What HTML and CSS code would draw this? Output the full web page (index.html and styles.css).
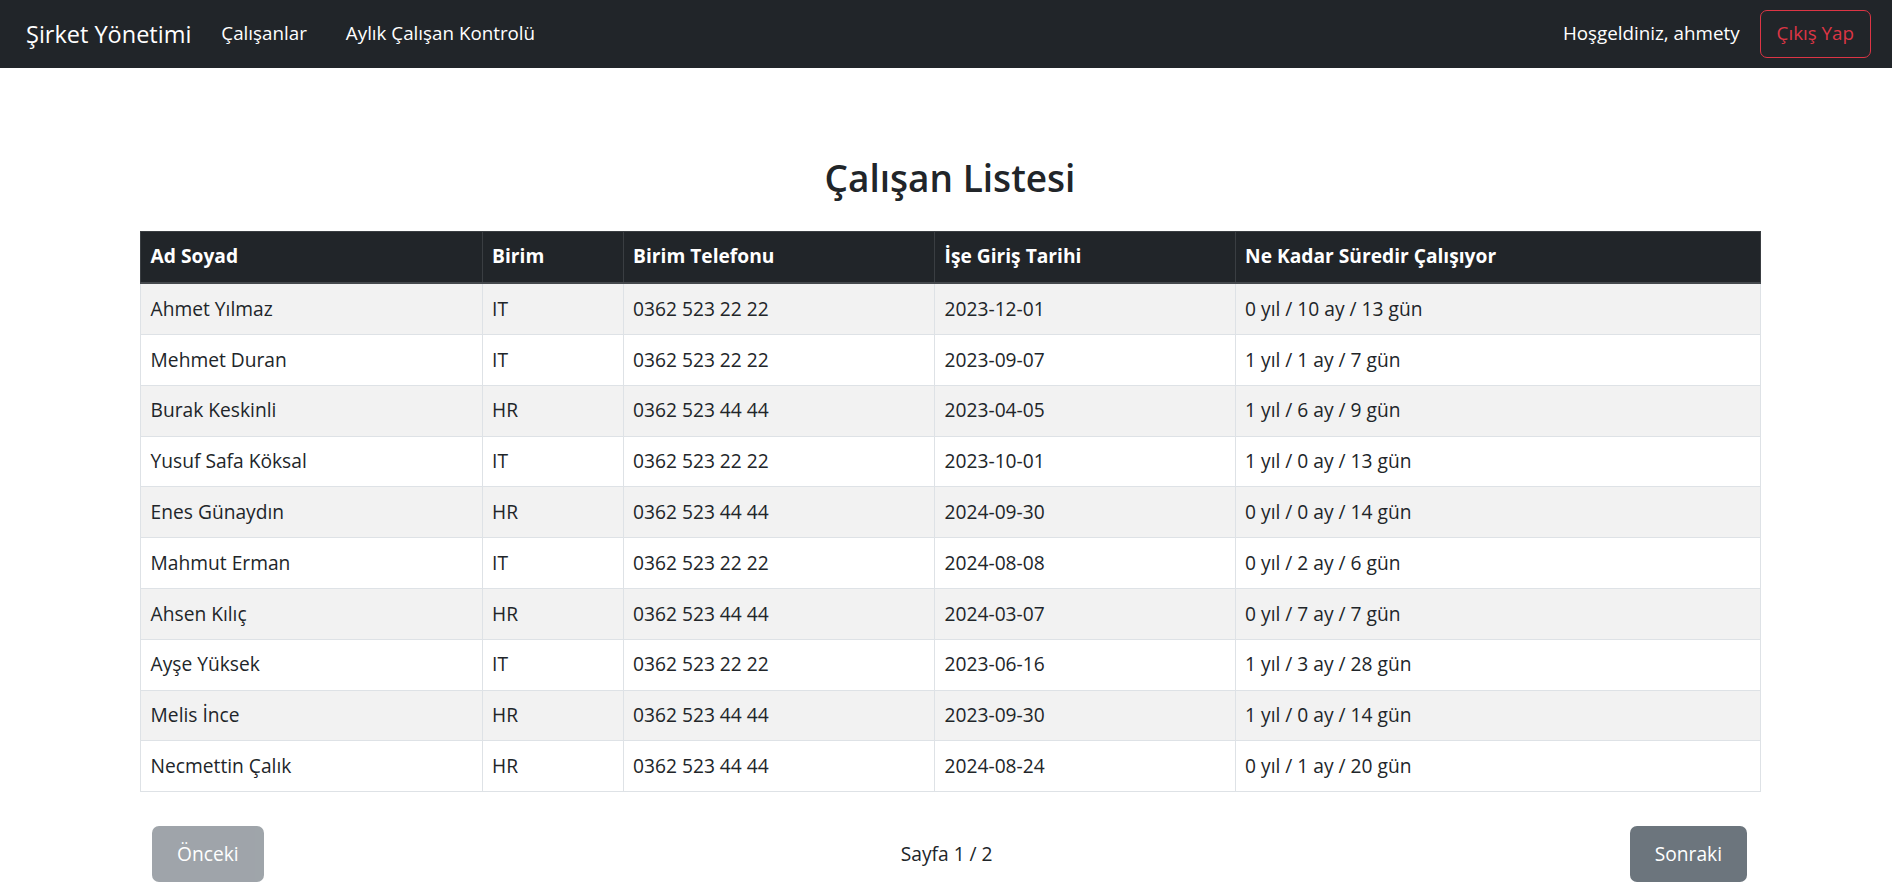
FILE: index.html
```html
<!DOCTYPE html>
<html lang="tr">
<head>
<meta charset="utf-8">
<title>Şirket Yönetimi</title>
<link rel="stylesheet" href="styles.css">
</head>
<body>
<nav class="navbar">
  <div class="nav-left">
    <a class="brand" href="#">Şirket Yönetimi</a>
    <a class="nav-link first" href="#">Çalışanlar</a>
    <a class="nav-link" href="#">Aylık Çalışan Kontrolü</a>
  </div>
  <div class="nav-right">
    <span class="welcome">Hoşgeldiniz, ahmety</span>
    <button class="btn-logout">Çıkış Yap</button>
  </div>
</nav>
<main class="content">
  <h2 class="title">Çalışan Listesi</h2>
  <table class="emp-table">
    <colgroup>
      <col class="c1"><col class="c2"><col class="c3"><col class="c4"><col class="c5">
    </colgroup>
    <thead>
      <tr><th>Ad Soyad</th><th>Birim</th><th>Birim Telefonu</th><th>İşe Giriş Tarihi</th><th>Ne Kadar Süredir Çalışıyor</th></tr>
    </thead>
    <tbody>
      <tr><td>Ahmet Yılmaz</td><td>IT</td><td>0362 523 22 22</td><td>2023-12-01</td><td>0 yıl / 10 ay / 13 gün</td></tr>
      <tr><td>Mehmet Duran</td><td>IT</td><td>0362 523 22 22</td><td>2023-09-07</td><td>1 yıl / 1 ay / 7 gün</td></tr>
      <tr><td>Burak Keskinli</td><td>HR</td><td>0362 523 44 44</td><td>2023-04-05</td><td>1 yıl / 6 ay / 9 gün</td></tr>
      <tr><td>Yusuf Safa Köksal</td><td>IT</td><td>0362 523 22 22</td><td>2023-10-01</td><td>1 yıl / 0 ay / 13 gün</td></tr>
      <tr><td>Enes Günaydın</td><td>HR</td><td>0362 523 44 44</td><td>2024-09-30</td><td>0 yıl / 0 ay / 14 gün</td></tr>
      <tr><td>Mahmut Erman</td><td>IT</td><td>0362 523 22 22</td><td>2024-08-08</td><td>0 yıl / 2 ay / 6 gün</td></tr>
      <tr><td>Ahsen Kılıç</td><td>HR</td><td>0362 523 44 44</td><td>2024-03-07</td><td>0 yıl / 7 ay / 7 gün</td></tr>
      <tr><td>Ayşe Yüksek</td><td>IT</td><td>0362 523 22 22</td><td>2023-06-16</td><td>1 yıl / 3 ay / 28 gün</td></tr>
      <tr><td>Melis İnce</td><td>HR</td><td>0362 523 44 44</td><td>2023-09-30</td><td>1 yıl / 0 ay / 14 gün</td></tr>
      <tr><td>Necmettin Çalık</td><td>HR</td><td>0362 523 44 44</td><td>2024-08-24</td><td>0 yıl / 1 ay / 20 gün</td></tr>
    </tbody>
  </table>
  <div class="pager">
    <button class="btn btn-disabled">Önceki</button>
    <span class="page-info">Sayfa 1 / 2</span>
    <button class="btn btn-secondary">Sonraki</button>
  </div>
</main>
</body>
</html>
```
FILE: styles.css
```css
* { box-sizing: border-box; }
html, body { margin: 0; padding: 0; }
body {
  font-family: "Open Sans", "Noto Sans", sans-serif;
  font-size: 19.2px;
  line-height: 28.8px;
  color: #212529;
  background: #fff;
}
.navbar {
  height: 67.5px;
  background: #212529;
  display: flex;
  align-items: center;
  justify-content: space-between;
  padding: 0 21px 0 26px;
}
.nav-left, .nav-right { display: flex; align-items: center; }
.brand {
  color: #fff;
  text-decoration: none;
  font-size: 23.5px;
  line-height: 36px;
  margin-right: 30px;
}
.nav-link {
  color: #fff;
  text-decoration: none;
  font-size: 18.8px;
  margin-right: 39px;
}
.welcome { color: #fff; margin-right: 20px; font-size: 18.8px; }
.btn-logout {
  font-family: inherit;
  font-size: 18.8px;
  line-height: 28.8px;
  color: #dc3545;
  background: transparent;
  border: 1px solid #dc3545;
  border-radius: 7px;
  height: 48.5px;
  padding: 0 16px;
}
.content {
  padding: 87px 0 0 140px;
}
.title {
  width: 1620px;
  margin: 0 0 30px 0;
  text-align: center;
  font-size: 37px;
  line-height: 46px;
  font-weight: 600;
}
.emp-table {
  width: 1620px;
  border-collapse: collapse;
  table-layout: fixed;
}
.c1 { width: 341.5px; }
.c2 { width: 141px; }
.c3 { width: 311.5px; }
.c4 { width: 300.5px; }
.c5 { width: 525.5px; }
.emp-table th, .emp-table td {
  text-align: left;
  padding: 10.5px 9.6px;
  border: 1px solid #dee2e6;
  white-space: nowrap;
}
.emp-table th {
  background: #212529;
  color: #fff;
  font-weight: 700;
  border-color: #3a3e42;
  padding-bottom: 11.5px;
  border-bottom: 2px solid #45494d;
}
.emp-table tbody tr:nth-child(odd) td { background: #f2f2f2; }
.pager {
  width: 1620px;
  margin-top: 34px;
  padding: 0 13px 0 12px;
  display: flex;
  justify-content: space-between;
  align-items: center;
}
.btn {
  font-family: inherit;
  font-size: 19.2px;
  line-height: 28.8px;
  color: #fff;
  border: none;
  border-radius: 7px;
  height: 55.5px;
  padding: 0 25px;
}
.btn-secondary { background: #6c757d; }
.btn-disabled { background: #6c757d; opacity: 0.65; }
```
